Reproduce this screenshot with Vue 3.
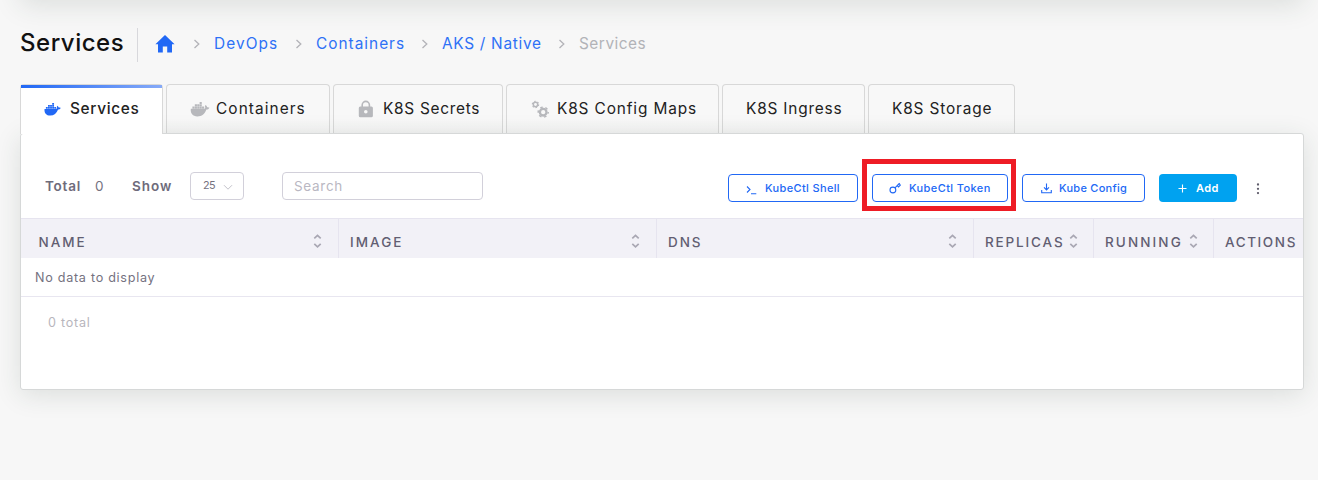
<script setup>
const crumbs = [
  { label: 'DevOps', left: 215, w: 81, ls: 1.1 },
  { label: 'Containers', left: 317, w: 105, ls: 1.0 },
  { label: 'AKS / Native', left: 443, w: 116, ls: 0.7 },
  { label: 'Services', left: 580, w: 80, ls: 0.5, last: true },
]
const tabs = [
  { label: 'Services', icon: 'docker', w: 143, pad: 24, gap: 9, ls: 0.67, active: true },
  { label: 'Containers', icon: 'docker-lg', w: 164, pad: 24, gap: 6, ls: 1.08 },
  { label: 'K8S Secrets', icon: 'lock', w: 170, pad: 25, gap: 9, ls: 0.72 },
  { label: 'K8S Config Maps', icon: 'gears', w: 213, pad: 25, gap: 8, ls: 0.87 },
  { label: 'K8S Ingress', w: 143, pad: 24, gap: 0, ls: 0.81 },
  { label: 'K8S Storage', w: 147, pad: 24, gap: 0, ls: 0.86 },
]
const columns = [
  { label: 'NAME', w: 318, ls: 2.0 },
  { label: 'IMAGE', w: 318, ls: 2.05 },
  { label: 'DNS', w: 317, ls: 1.9 },
  { label: 'REPLICAS', w: 120, ls: 1.85 },
  { label: 'RUNNING', w: 120, ls: 2.1 },
  { label: 'ACTIONS', w: 111, ls: 1.6 },
]
</script>

<template>
  <div class="page">
    <div class="above"></div>
    <header class="head">
      <h1>Services</h1>
      <nav class="crumbs">
        <svg class="home" width="20" height="18" viewBox="0 0 20 18"><path d="M10 0 L19.6 9.2 H17 V17.4 H12.2 V11.4 H7.8 V17.4 H3 V9.2 H0.4 Z" /></svg>
        <svg class="chev" width="8" height="10" viewBox="0 0 8 10"><path d="M1.5 1 L5.8 5 L1.5 9" /></svg>
        <template v-for="c in crumbs" :key="c.left">
          <span class="crumb" :class="{ last: c.last }" :style="{ width: c.w + 'px', letterSpacing: c.ls + 'px' }">{{ c.label }}</span>
          <svg v-if="!c.last" class="chev" width="8" height="10" viewBox="0 0 8 10"><path d="M1.5 1 L5.8 5 L1.5 9" /></svg>
        </template>
      </nav>
    </header>

    <div class="tabs">
      <div v-for="t in tabs" :key="t.label" class="tab" :class="{ active: t.active }" :style="{ width: t.w + 'px', paddingLeft: t.pad - 1 + 'px', gap: t.gap + 'px' }">
        <svg v-if="t.icon === 'docker' || t.icon === 'docker-lg'" :width="t.icon === 'docker' ? 17 : 20" :height="t.icon === 'docker' ? 13 : 15" viewBox="0 0 18 14">
          <path d="M0.4 6.4 H12.6 C13.4 6.4 14 6 13.9 5.2 C13.5 4.2 13.7 3.4 14.2 2.900 C15.100 3.500 15.600 4.200 15.700 4.900 C16.500 4.700 17.300 4.900 17.800 5.300 C17.200 6.500 16.200 7 15 7 C13.500 11.200 10.600 13.500 6.600 13.500 C2.200 13.500 0 10.900 0.400 6.400 Z" />
          <path d="M1.900 4.300h2v1.900h-2z M4.150 4.300h2v1.900h-2z M6.400 4.300h2v1.900h-2z M8.650 4.300h2v1.900h-2z M10.900 4.300h2v1.900h-2z M4.150 2.200h2v1.850h-2z M6.400 2.200h2v1.850h-2z M8.650 2.200h2v1.850h-2z M8.650 0.100h2v1.850h-2z" />
        </svg>
        <svg v-else-if="t.icon === 'lock'" width="16" height="18" viewBox="0 0 16 18">
          <path fill-rule="evenodd" d="M2.2 6.6H3.4V5a4.4 4.4 0 0 1 8.8 0v1.6h1.2a1.5 1.5 0 0 1 1.5 1.5v7.6a1.6 1.6 0 0 1-1.6 1.6H2.4A1.6 1.6 0 0 1 .8 15.700V8.100A1.5 1.500 0 0 1 2.200 6.600Z M5 6.600H10.600V5a2.800 2.800 0 0 0-5.600 0Z M7.800 10a1.800 1.800 0 1 0 0 3.600a1.800 1.800 0 0 0 0-3.600Z" />
        </svg>
        <svg v-else-if="t.icon === 'gears'" width="18" height="18" viewBox="0 0 18 18" class="gears">
          <circle cx="4.500" cy="4.500" r="2.200" stroke-width="1.500" />
          <circle cx="4.500" cy="4.500" r="3.200" stroke-width="1.100" stroke-dasharray="1.500 1.850" />
          <circle cx="12.200" cy="12.200" r="3.300" stroke-width="2.300" />
          <circle cx="12.200" cy="12.200" r="5" stroke-width="1.500" stroke-dasharray="2.500 2.736" stroke-dashoffset="1" />
        </svg>
        <span class="tab-label" :style="{ letterSpacing: t.ls + 'px' }">{{ t.label }}</span>
      </div>
    </div>

    <main class="panel">
      <div class="tools">
        <b class="total">Total</b>
        <span class="count">0</span>
        <b class="show">Show</b>
        <div class="select">
          <span>25</span>
          <svg width="10" height="7" viewBox="0 0 10 7"><path d="M1 1.200 L5 5.200 L9 1.200" /></svg>
        </div>
        <div class="search">Search</div>
        <div class="actions">
          <button class="btn shell">
            <svg width="11" height="10" viewBox="0 0 11 10"><path d="M1 1.500 L4 4.500 L1 7.500 M5 8.700 H10.300" /></svg>
            <span>KubeCtl Shell</span>
          </button>
          <div class="highlight">
            <button class="btn token">
              <svg width="12" height="12" viewBox="0 0 12 12"><circle cx="3.900" cy="8" r="2.900" /><path d="M6 5.900 L10.300 1.500 M8.100 3.700 L9.500 5 L11.300 3.200 L10.300 1.500 L8.700 3" /></svg>
              <span>KubeCtl Token</span>
            </button>
          </div>
          <button class="btn config">
            <svg width="11" height="11" viewBox="0 0 11 11"><path d="M0.700 7 V9.800 H10.300 V7 M5.500 0.600 V6.800 M3 4.400 L5.500 6.900 L8 4.400" /></svg>
            <span>Kube Config</span>
          </button>
          <button class="btn add">
            <svg width="9" height="9" viewBox="0 0 9 9"><path d="M4.500 0.500 V8.500 M0.500 4.500 H8.500" /></svg>
            <span>Add</span>
          </button>
          <svg class="more" width="4" height="12" viewBox="0 0 4 12"><circle cx="2" cy="1.500" r="1.150" /><circle cx="2" cy="5.800" r="1.150" /><circle cx="2" cy="10.100" r="1.150" /></svg>
        </div>
      </div>

      <div class="thead">
        <div v-for="c in columns" :key="c.label" class="th" :style="{ width: c.w + 'px' }">
          <span :style="{ letterSpacing: c.ls + 'px' }">{{ c.label }}</span>
          <svg width="9" height="14" viewBox="0 0 9 14"><path d="M1.300 4.400 L4.500 1.400 L7.700 4.400 M1.300 9.800 L4.500 12.800 L7.700 9.800" /></svg>
        </div>
      </div>
      <div class="empty">No data to display</div>
      <div class="foot">0 total</div>
    </main>
  </div>
</template>

<style>
html, body { margin: 0; background: #f7f7f7; overflow: hidden; }
</style>

<style scoped>
* { box-sizing: border-box; }
.page {
  position: relative;
  width: 1318px;
  height: 480px;
  overflow: hidden;
  background: #f7f7f7;
  font-family: Inter, "Liberation Sans", sans-serif;
  color: #222;
}
.above {
  position: absolute;
  top: -100px;
  left: 20px;
  width: 1284px;
  height: 100px;
  box-shadow: 0 5px 26px rgba(40, 58, 50, 0.13);
}
.head { position: relative; display: flex; height: 84px; padding-left: 20px; }
h1 {
  width: 118px;
  height: 34px;
  margin: 28px 0 0;
  border-right: 1px solid #d8d8dc;
  font-size: 24px;
  line-height: 30px;
  font-weight: 500;
  letter-spacing: 0.52px;
  color: #111;
}
.crumbs { display: flex; align-items: center; height: 30px; margin-top: 29px; padding-left: 16.5px; }
.home { fill: #2168f5; margin-right: 18px; }
.chev { flex: none; fill: none; stroke: #b3b3b8; stroke-width: 1.3; margin-right: 13.500px; }
.crumb { flex: none; margin-right: -0.5px; font-size: 15.4px; line-height: 20px; color: #2e71f6; white-space: nowrap; }
.crumb.last { color: #b2b3b8; }
.tabs { position: relative; display: flex; gap: 3px; height: 49px; padding-left: 20px; }
.tab {
  position: relative;
  display: flex;
  align-items: center;
  border: 1px solid #d8d8d8;
  border-bottom: 0;
  border-radius: 4px 4px 0 0;
  background: linear-gradient(#f8f8f8 70%, #f3f3f3);
  fill: #b7b8bc;
  white-space: nowrap;
}
.tab svg { flex: none; }
.tab.active { z-index: 2; height: 50px; background: #fff; fill: #2168f5; padding-bottom: 1px; }
.tab.active::before {
  content: "";
  position: absolute;
  left: 0;
  right: 0;
  top: 0;
  height: 3px;
  background: linear-gradient(90deg, #2168f5, #86aaf8);
}
.gears { fill: none; stroke: #b7b8bc; }
.tab-label { font-size: 15.4px; line-height: 20px; }
.active .tab-label { font-weight: 500; }
.panel {
  position: relative;
  z-index: 1;
  width: 1284px;
  height: 257px;
  margin-left: 20px;
  border: 1px solid #d6d8d8;
  border-radius: 3px;
  background: #fff;
  box-shadow: 0 5px 26px rgba(40, 58, 50, 0.13);
  color: #75727f;
}
.tools { display: flex; height: 84px; padding-left: 24px; font-size: 13.5px; line-height: 28px; }
.tools > * { margin-top: 38px; }
.tools b { font-weight: 600; color: #6e6b7b; }
.total { width: 50px; letter-spacing: 0.75px; }
.count { width: 37px; }
.show { width: 58px; letter-spacing: 1px; }
.select {
  display: flex;
  align-items: center;
  width: 54px;
  height: 28px;
  padding-left: 12px;
  gap: 6px;
  border: 1px solid #d2d0da;
  border-radius: 4px;
  font-size: 10.8px;
}
.select span { width: 14px; letter-spacing: -0.5px; }
.select svg { fill: none; stroke: #c3c2ca; margin-top: 3px; }
.search {
  width: 201px;
  height: 28px;
  margin-left: 38px;
  padding-left: 11px;
  border: 1px solid #d2d0da;
  border-radius: 4px;
  line-height: 27px;
  letter-spacing: 0.7px;
  color: #b9b7c2;
}
.tools .actions { display: flex; margin: 25px 0 0 245px; height: 52px; align-items: center; }
.btn {
  display: flex;
  align-items: center;
  height: 28px;
  margin-top: 6px;
  padding: 0 0 0 17px;
  border: 1px solid #2168f5;
  border-radius: 4px;
  background: #fff;
  color: #2168f5;
  font: 500 11px/16px Inter, "Liberation Sans", sans-serif;
  white-space: nowrap;
}
.btn svg { flex: none; fill: none; stroke: currentColor; stroke-width: 1.1; }
.shell { width: 130px; gap: 8px; letter-spacing: 0.36px; }
.shell svg { margin-top: 3px; }
.highlight { display: flex; width: 154px; height: 52px; margin: 0 6px 0 4px; padding: 10px 0 0 5px; border: 5px solid #ee1c25; }
.highlight .btn { margin-top: 0; }
.token { width: 136px; padding-left: 16px; gap: 8px; letter-spacing: 0.4px; }
.config { width: 123px; padding-left: 18px; gap: 7px; letter-spacing: 0.27px; }
.add { width: 78px; margin-left: 14px; padding-left: 19px; gap: 9px; border: 0; background: #00a2f0; color: #fff; font-weight: 600; letter-spacing: 0.4px; }
.more { fill: #5f5c6b; margin: 8px 0 0 19px; }
.thead { display: flex; height: 40px; overflow: hidden; border-top: 1px solid #e6e4ef; background: #f2f1f7; }
.th {
  flex: none;
  display: flex;
  justify-content: space-between;
  padding: 13px 16px 0 11px;
  border-right: 1px solid #e6e4ef;
  font-size: 13.5px;
  font-weight: 550;
  line-height: 20px;
  color: #625e72;
}
.th:first-child { padding-left: 17.5px; }
.th:nth-child(n + 4) { padding-right: 15px; }
.th:last-child { padding-right: 7px; }
.th svg { flex: none; margin-top: 2px; fill: none; stroke: #a9a7b3; stroke-width: 1.7; }
.empty { height: 39px; padding-left: 14px; border-bottom: 1px solid #e8e6f0; font-size: 12.6px; line-height: 40px; letter-spacing: 0.72px; }
.foot { padding: 16px 0 0 27px; font-size: 12.6px; line-height: 20px; letter-spacing: 0.75px; color: #b8b6bd; }
</style>
